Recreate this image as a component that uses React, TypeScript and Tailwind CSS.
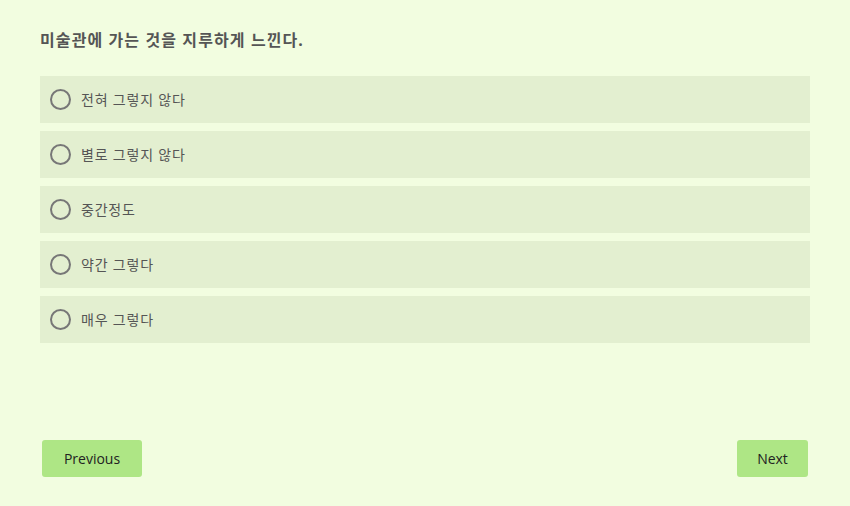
import React from "react";

const options = ["전혀 그렇지 않다", "별로 그렇지 않다", "중간정도", "약간 그렇다", "매우 그렇다"];

export default function App() {
  return (
    <div className="w-[850px] h-[506px] bg-[#f2fde0] px-[40px] pt-[28px] flex flex-col" style={{ fontFamily: '"Noto Sans", "Noto Sans CJK KR", sans-serif' }}>
      <h1 className="text-[16px] font-bold text-[#555] leading-[24px] tracking-[1.1px]">미술관에 가는 것을 지루하게 느낀다.</h1>
      <div className="mt-[24px] flex flex-col gap-[8px]">
        {options.map((o) => (
          <label key={o} className="h-[47px] bg-[#e3efd0] flex items-center pl-[10px]">
            <span className="w-[21px] h-[21px] rounded-full border-2 border-[#777] box-border" />
            <span className="ml-[10px] text-[14px] text-[#555] tracking-[0.8px]">{o}</span>
          </label>
        ))}
      </div>
      <div className="mt-auto mb-[29px] flex justify-between px-[2px]">
        <button className="w-[100px] h-[37px] rounded-[3px] bg-[#aee685] text-[14px] text-[#222]" style={{ fontFamily: '"Open Sans", sans-serif' }}>Previous</button>
        <button className="w-[71px] h-[37px] rounded-[3px] bg-[#aee685] text-[14px] text-[#222]" style={{ fontFamily: '"Open Sans", sans-serif' }}>Next</button>
      </div>
    </div>
  );
}
